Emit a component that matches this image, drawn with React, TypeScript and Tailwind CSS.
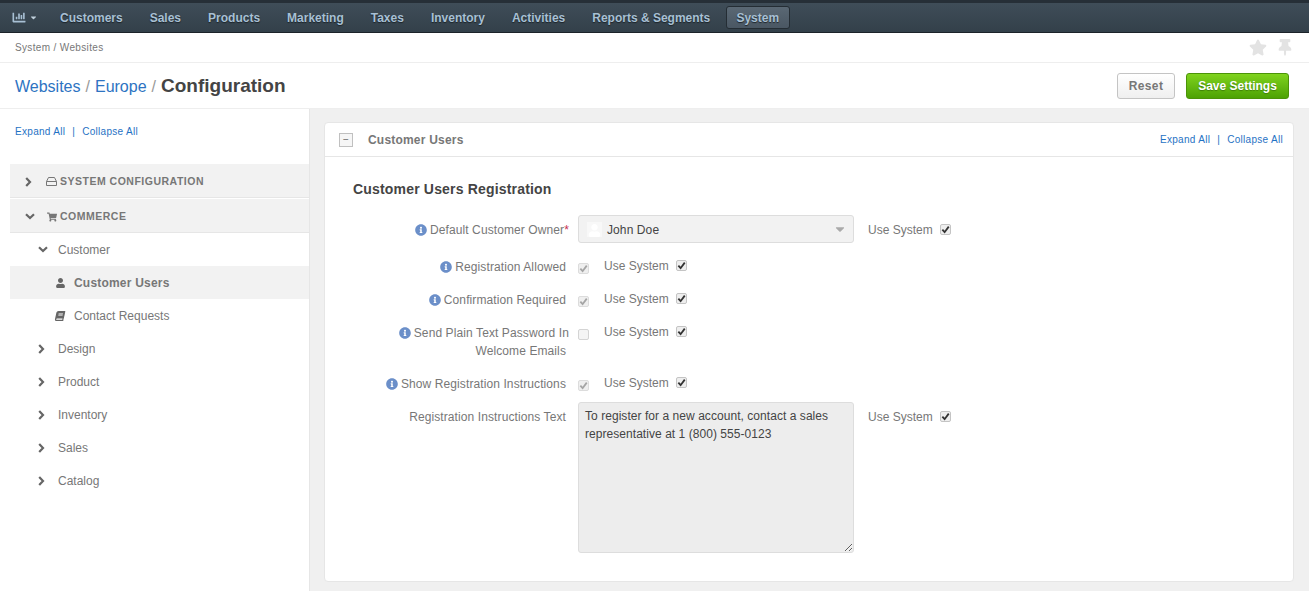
import React from 'react';
import {
  FaBook,
  FaCaretDown,
  FaChartBar,
  FaInfoCircle,
  FaShoppingCart,
  FaStar,
  FaThumbtack,
  FaUser,
} from 'react-icons/fa';

const navItems = ['Customers', 'Sales', 'Products', 'Marketing', 'Taxes', 'Inventory', 'Activities', 'Reports & Segments'];

function Chevron({ open }: { open?: boolean }) {
  return open ? (
    <svg viewBox="0 0 10 7" className="h-[7px] w-[10px]">
      <path d="M1 1.2 5 5 9 1.2" fill="none" stroke="#666666" strokeWidth="2.2" />
    </svg>
  ) : (
    <svg viewBox="0 0 7 10" className="h-[10px] w-[7px]">
      <path d="M1.2 1 5 5 1.2 9" fill="none" stroke="#666666" strokeWidth="2.2" />
    </svg>
  );
}

function Check({ disabled }: { disabled?: boolean }) {
  return (
    <span
      className={`flex h-[11px] w-[11px] shrink-0 items-center justify-center rounded-[2px] border ${
        disabled ? 'border-[#dcdcdc] bg-[#efefef]' : 'border-[#c4c4c4] bg-[#eeeeee]'
      }`}
    >
      <svg viewBox="0 0 10 10" className="h-[9px] w-[9px]">
        <path d="M1.5 5.2 4 8 8.6 1.8" fill="none" stroke={disabled ? '#a5a5a5' : '#333333'} strokeWidth="2" />
      </svg>
    </span>
  );
}

function UseSystem({ className }: { className?: string }) {
  return (
    <div className={`flex items-center text-[12px] leading-[18px] text-[#777777] ${className ?? ''}`}>
      <span className="w-[72px]">Use System</span>
      <span className="mb-[2px]">
        <Check />
      </span>
    </div>
  );
}

function InfoIcon() {
  return <FaInfoCircle className="mr-[3px] inline-block h-[12px] w-[12px] align-[-2px] text-[#6b8fc9]" />;
}

function Label({ children, info = true, two }: { children: React.ReactNode; info?: boolean; two?: string }) {
  return (
    <div className="w-[213px] shrink-0 pt-px text-right text-[12px] leading-[18px] tracking-[0.1px] text-[#777777]">
      <div className={two ? '-mr-[3px]' : ''}>
        {info && <InfoIcon />}
        {children}
      </div>
      {two && <div>{two}</div>}
    </div>
  );
}

function CheckRow({ label, two, checked = true, className }: { label: string; two?: string; checked?: boolean; className?: string }) {
  return (
    <div className={`flex items-start ${className ?? ''}`}>
      <Label two={two}>{label}</Label>
      <div className="ml-[12px] mt-[6px] w-[26px]">
        {checked ? (
          <Check disabled />
        ) : (
          <span className="block h-[11px] w-[11px] rounded-[2px] border border-[#d4d4d4] bg-[#f4f4f4]" />
        )}
      </div>
      <UseSystem />
    </div>
  );
}

function TreeRow({ label, open }: { label: string; open?: boolean }) {
  return (
    <div className="flex h-[33px] items-center pl-[28px] text-[12px] text-[#777777]">
      <span className="w-[20px]">
        <Chevron open={open} />
      </span>
      {label}
    </div>
  );
}

function ExpandLinks() {
  return (
    <div className="flex text-[10px] leading-[14px] tracking-[0.3px] text-[#1f72c4]">
      <a>Expand All</a>
      <span className="mx-[7px]">|</span>
      <a>Collapse All</a>
    </div>
  );
}

export default function App() {
  return (
    <div className="flex h-[591px] w-[1309px] flex-col overflow-hidden bg-white font-['Liberation_Sans',Arial,sans-serif]">
      <div className="h-[3px] bg-[#262f37]" />
      <nav className="flex h-[30px] items-center border-b border-[#1c2329] bg-gradient-to-b from-[#3f4d58] to-[#33404a] pl-[12px] text-[12px] font-bold text-[#a8c0d4] [text-shadow:0_1px_1px_#1c2329]">
        <div className="flex w-[34.5px] items-center gap-[4px]">
          <FaChartBar className="h-[13px] w-[14px]" />
          <FaCaretDown className="h-[9px] w-[7px] text-[#c0d0dc]" />
        </div>
        {navItems.map((item) => (
          <span key={item} className="px-[13.5px]">
            {item}
          </span>
        ))}
        <span className="ml-[2px] flex h-[23px] w-[64px] items-center justify-center rounded-[3px] border border-[#242d34] bg-gradient-to-b from-[#5a6874] to-[#4a5763]">
          System
        </span>
      </nav>

      <div className="flex h-[30px] items-center justify-between border-b border-[#eeeeee] pl-[15px] pr-[17px] text-[10px] tracking-[0.35px] text-[#777777]">
        <span>System / Websites</span>
        <div className="flex items-center gap-[11px] text-[#e3e3e3]">
          <FaStar className="h-[17px] w-[18px]" />
          <FaThumbtack className="h-[17px] w-[14px]" />
        </div>
      </div>

      <div className="flex h-[45px] items-center justify-between pl-[15px] pr-[20px]">
        <div className="mt-[2px] flex items-center text-[16px] text-[#2d73c2]">
          <span>Websites</span>
          <span className="mx-[5px] text-[#999999]">/</span>
          <span>Europe</span>
          <span className="mx-[5px] text-[#999999]">/</span>
          <span className="mb-px text-[19px] font-bold text-[#444444]">Configuration</span>
        </div>
        <div className="flex gap-[11px] text-[12px] font-bold">
          <button className="h-[26px] w-[58px] rounded-[3px] border border-[#c4c4c4] bg-gradient-to-b from-white to-[#efefef] tracking-[0.4px] text-[#777777]">
            Reset
          </button>
          <button className="h-[26px] w-[103px] rounded-[3px] border border-[#4b9408] bg-gradient-to-b from-[#7fd31d] to-[#4da204] text-white [text-shadow:0_1px_1px_#3f7f08]">
            Save Settings
          </button>
        </div>
      </div>

      <div className="flex min-h-0 flex-1 border-t border-[#eeeeee]">
        <aside className="w-[309px] shrink-0 pl-[10px]">
          <div className="pl-[5px] pt-[16px]">
            <ExpandLinks />
          </div>
          <div className="mt-[25px] flex h-[34px] items-center border-b border-[#e6e6e6] bg-[#f2f2f2] pl-[15px] pt-[2px] text-[10.5px] font-bold tracking-[0.5px] text-[#777777]">
            <Chevron />
            <svg viewBox="0 0 11 9" className="ml-[14px] mr-[3px] h-[9px] w-[11px]">
              <path d="M2.5.5h6L10.5 4.5v4h-10v-4zM.5 4.5h10" fill="none" stroke="#777777" />
            </svg>
            SYSTEM CONFIGURATION
          </div>
          <div className="mt-px flex h-[34px] items-center border-b border-[#e6e6e6] bg-[#f2f2f2] pl-[15px] pt-[2px] text-[10.5px] font-bold tracking-[0.5px] text-[#777777]">
            <Chevron open />
            <span className="ml-[12px] mr-[3px]">
              <FaShoppingCart className="h-[10px] w-[10px]" />
            </span>
            COMMERCE
          </div>
          <TreeRow label="Customer" open />
          <div className="flex h-[33px] items-center bg-[#f2f2f2] pl-[46px] text-[12px] font-bold tracking-[0.2px] text-[#777777]">
            <span className="w-[18px]">
              <FaUser className="h-[10px] w-[9px] text-[#666666]" />
            </span>
            Customer Users
          </div>
          <div className="flex h-[33px] items-center pl-[45px] text-[12px] text-[#777777]">
            <span className="w-[19px]">
              <FaBook className="h-[10px] w-[10px] -skew-x-12 text-[#666666]" />
            </span>
            Contact Requests
          </div>
          {['Design', 'Product', 'Inventory', 'Sales', 'Catalog'].map((t) => (
            <TreeRow key={t} label={t} />
          ))}
        </aside>

        <main className="min-w-0 flex-1 border-l border-[#e6e6e6] bg-[#f0f0f0] pl-[14px] pr-[15px] pt-[13px]">
          <section className="h-[460px] rounded-[4px] border border-[#e6e6e6] bg-white">
            <header className="flex h-[34px] items-center justify-between border-b border-[#e6e6e6] pl-[14px] pr-[10px]">
              <div className="flex items-center">
                <span className="flex h-[14px] w-[14px] items-center justify-center border border-[#c0c0c0] bg-[#f6f6f6] text-[10px] leading-none text-[#666666]">
                  −
                </span>
                <span className="ml-[15px] text-[12px] font-bold tracking-[0.2px] text-[#777777]">Customer Users</span>
              </div>
              <ExpandLinks />
            </header>
            <div className="pl-[28px] pt-[22px]">
              <h3 className="text-[14px] font-bold leading-[20px] tracking-[0.18px] text-[#444444]">Customer Users Registration</h3>
              <div className="mt-[16px] flex items-center">
                <div className="mt-[2px] w-[216px] shrink-0 text-right text-[12px] tracking-[0.1px] text-[#777777]">
                  <InfoIcon />
                  Default Customer Owner<span className="text-[#c8304f]">*</span>
                </div>
                <div className="ml-[9px] flex h-[28px] w-[276px] items-center justify-between rounded-[3px] border border-[#dddddd] bg-[#f2f2f2] pl-[8px] pr-[6px] text-[12px] text-[#444444]">
                  <div className="flex items-center gap-[5px] tracking-[0.1px]">
                    <span className="flex h-[15px] w-[15px] items-end justify-center overflow-hidden bg-[#f8f8f8]">
                      <FaUser className="h-[13px] w-[13px] text-white" />
                    </span>
                    <span className="pt-px">John Doe</span>
                  </div>
                  <FaCaretDown className="h-[14px] w-[14px] text-[#aaaaaa]" />
                </div>
                <UseSystem className="ml-[14px] mt-[2px]" />
              </div>
              <CheckRow label="Registration Allowed" className="mt-[14px]" />
              <CheckRow label="Confirmation Required" className="mt-[14px]" />
              <CheckRow label="Send Plain Text Password In" two="Welcome Emails" checked={false} className="mt-[14px]" />
              <CheckRow label="Show Registration Instructions" className="mt-[14px]" />
              <div className="mt-[9px] flex items-start">
                <div className="mt-[5px]">
                  <Label info={false}>Registration Instructions Text</Label>
                </div>
                <textarea
                  readOnly
                  defaultValue="To register for a new account, contact a sales representative at 1 (800) 555-0123"
                  className="ml-[12px] h-[151px] w-[276px] rounded-[3px] border border-[#dddddd] bg-[#ededed] px-[6px] py-[4px] text-[12px] leading-[18px] tracking-[0.05px] text-[#444444] outline-none"
                />
                <UseSystem className="ml-[14px] mt-[6px]" />
              </div>
            </div>
          </section>
        </main>
      </div>
    </div>
  );
}
